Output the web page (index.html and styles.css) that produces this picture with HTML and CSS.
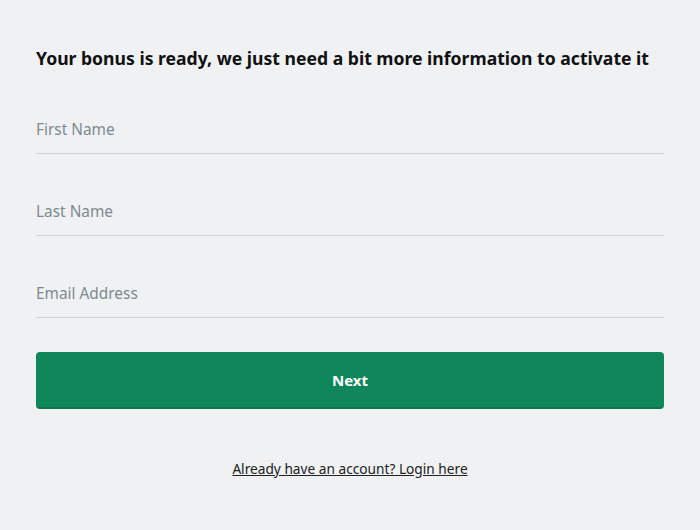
FILE: index.html
```html
<!DOCTYPE html>
<html lang="en">
<head>
    <meta charset="UTF-8">
    <meta name="viewport" content="width=device-width, initial-scale=1.0">
    <title>Activate bonus</title>
    <link rel="stylesheet" href="styles.css">
</head>
<body>
    <div id="signup_form">
        <h1 class="form_title">Your bonus is ready, we just need a bit more information to activate it</h1>
        <div class="field">
            <input type="text" id="first_name" placeholder="First Name">
        </div>
        <div class="field">
            <input type="text" id="last_name" placeholder="Last Name">
        </div>
        <div class="field">
            <input type="email" id="email" placeholder="Email Address">
        </div>
        <button class="next_btn">Next</button>
        <p class="login_link"><a href="#">Already have an account? Login here</a></p>
    </div>
</body>
</html>
```

FILE: styles.css
```css
body {
    font-family: 'Noto Sans', 'Open Sans', sans-serif;
    margin: 0;
    padding: 0;
    background-color: #eff1f3;
    color: #111;
}

#signup_form {
    padding: 36px 36px 0 36px;
    display: flex;
    flex-direction: column;
}

.form_title {
    font-size: 17.6px;
    font-weight: 700;
    margin: 10px 0 25px 0;
    white-space: nowrap;
    letter-spacing: 0;
}

.field {
    height: 82px;
    border-bottom: 1px solid #cfd3d6;
    box-sizing: border-box;
    display: flex;
    align-items: flex-start;
}

.field:first-of-type {
    height: 59px;
}

.field input {
    width: 100%;
    border: none;
    background: transparent;
    font-family: 'Noto Sans', 'Open Sans', sans-serif;
    font-size: 15.4px;
    padding: 0;
    height: 24px;
    margin-top: 45px;
    outline: none;
}

.field:first-of-type input {
    margin-top: 22px;
}

.field input::placeholder {
    color: #7c8a91;
}

.next_btn {
    margin-top: 34px;
    height: 57px;
    background-color: #10875a;
    border: none;
    border-bottom: 2px solid #0b774d;
    border-radius: 4px;
    color: #fff;
    font-family: 'Noto Sans', 'Open Sans', sans-serif;
    font-size: 15px;
    font-weight: 700;
    cursor: pointer;
}

.login_link {
    text-align: center;
    margin: 50px 0 0 0;
    font-size: 13.7px;
}

.login_link a {
    color: #222;
}
```
